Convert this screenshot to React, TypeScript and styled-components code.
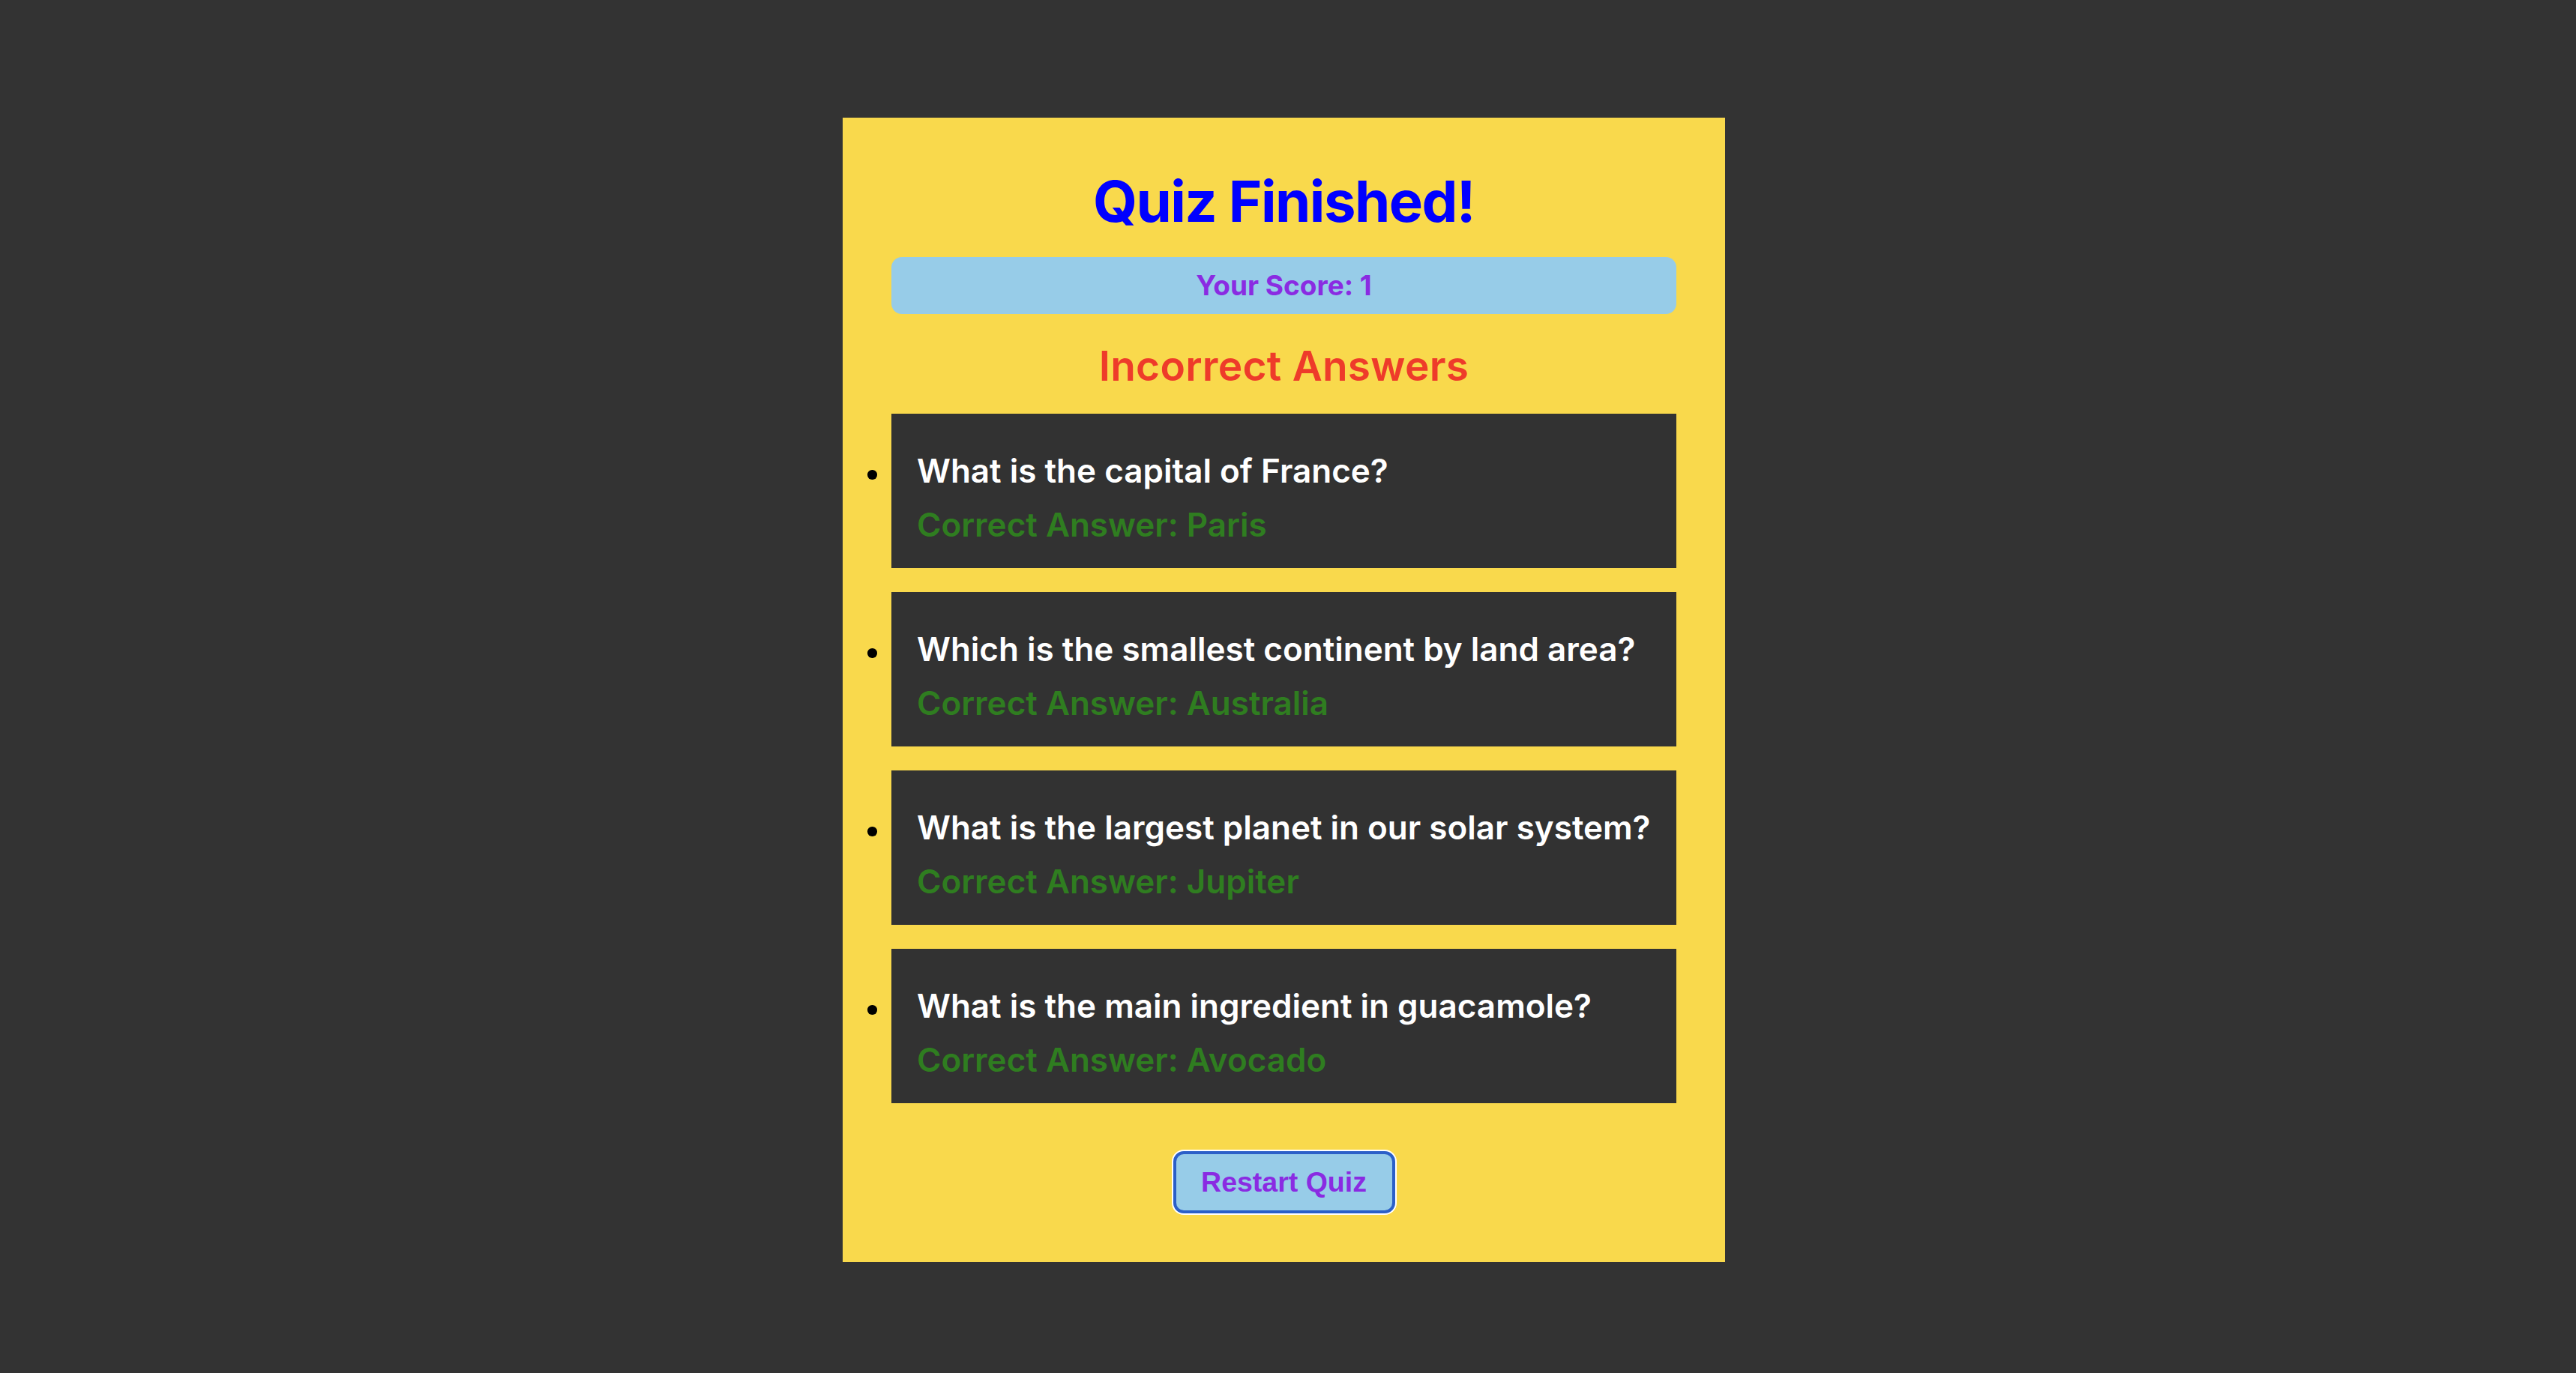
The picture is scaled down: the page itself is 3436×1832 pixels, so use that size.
import React from "react";
import styled, { createGlobalStyle } from "styled-components";

const GlobalStyle = createGlobalStyle`
  html, body {
    margin: 0;
    padding: 0;
    background: #333333;
  }
  body {
    font-family: Inter, "Noto Sans", "Liberation Sans", sans-serif;
  }
`;

const Page = styled.div`
  min-height: 1832px;
  box-sizing: border-box;
  display: flex;
  justify-content: center;
  align-items: flex-start;
  padding: 157px 11px 0 0;
  background: #333333;
`;

const Card = styled.div`
  width: 1177px;
  box-sizing: border-box;
  background: #f9d94c;
  padding: 65px 65px 65px;
  display: flex;
  flex-direction: column;
  align-items: stretch;
`;

const Title = styled.h1`
  margin: 0;
  font-size: 76px;
  line-height: 92px;
  font-weight: 700;
  letter-spacing: -0.02em;
  color: #0000ff;
  text-align: center;
`;

const ScoreBar = styled.div`
  margin-top: 29px;
  background: #97cce8;
  border-radius: 14px;
  padding: 16px 0;
  text-align: center;
  font-size: 37px;
  line-height: 44px;
  font-weight: 700;
  letter-spacing: 0;
  color: #8a2be2;
`;

const Subtitle = styled.h2`
  margin: 36px 0 0;
  font-size: 55px;
  line-height: 66px;
  font-weight: 600;
  letter-spacing: 0.005em;
  color: #ee3b2a;
  text-align: center;
`;

const List = styled.ul`
  list-style: none;
  margin: 31px 0 0;
  padding: 0;
  display: flex;
  flex-direction: column;
  gap: 32px;
`;

const Item = styled.li`
  position: relative;
  height: 206px;
  box-sizing: border-box;
  background: #323232;
  padding: 50px 34px 0;

  &::before {
    content: "";
    position: absolute;
    left: -32px;
    top: 75px;
    width: 12.5px;
    height: 12.5px;
    border-radius: 50%;
    background: #000000;
  }
`;

const Question = styled.p`
  margin: 0;
  font-size: 44px;
  line-height: 53px;
  font-weight: 600;
  letter-spacing: 0;
  color: #ffffff;
`;

const Answer = styled.p`
  margin: 19px 0 0;
  font-size: 44px;
  line-height: 53px;
  font-weight: 600;
  letter-spacing: 0;
  color: #2f7d20;
`;

const ButtonRow = styled.div`
  margin-top: 64px;
  display: flex;
  justify-content: center;
`;

const RestartButton = styled.button`
  width: 296px;
  height: 83px;
  box-sizing: border-box;
  background: #97cce8;
  border: 4px solid #2b5fc8;
  border-radius: 14px;
  box-shadow: 0 0 0 2px #ffffff;
  font-family: "Liberation Sans", Arial, sans-serif;
  font-size: 37.5px;
  font-weight: 700;
  color: #8a2be2;
  cursor: pointer;
  padding: 0;
`;

const items = [
  { q: "What is the capital of France?", a: "Paris" },
  { q: "Which is the smallest continent by land area?", a: "Australia" },
  { q: "What is the largest planet in our solar system?", a: "Jupiter" },
  { q: "What is the main ingredient in guacamole?", a: "Avocado" },
];

export default function App() {
  return (
    <>
      <GlobalStyle />
      <Page>
        <Card>
          <Title>Quiz Finished!</Title>
          <ScoreBar>Your Score: 1</ScoreBar>
          <Subtitle>Incorrect Answers</Subtitle>
          <List>
            {items.map((it) => (
              <Item key={it.q}>
                <Question>{it.q}</Question>
                <Answer>Correct Answer: {it.a}</Answer>
              </Item>
            ))}
          </List>
          <ButtonRow>
            <RestartButton>Restart Quiz</RestartButton>
          </ButtonRow>
        </Card>
      </Page>
    </>
  );
}
